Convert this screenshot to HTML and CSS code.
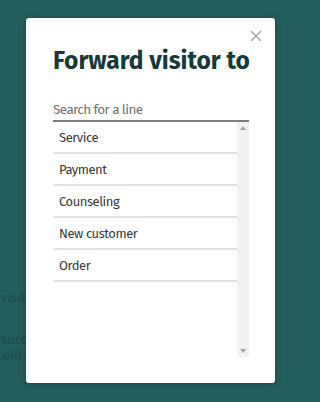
FILE: index.html
```html
<!DOCTYPE html>
<html>
<head>
<meta charset="utf-8">
<link rel="stylesheet" href="styles.css">
</head>
<body>
<div class="page">
  <p class="bg-line l1">visitor is forwarded</p>
  <p class="bg-line l2">succeeded</p>
  <p class="bg-line l3">will be notified</p>
</div>
<div class="modal">
  <button class="close" aria-label="Close">
    <svg width="12" height="12" viewBox="0 0 12 12"><path d="M1 1L11 11M11 1L1 11" stroke="#a9a9a9" stroke-width="1.6" fill="none"/></svg>
  </button>
  <h1 class="title">Forward visitor to</h1>
  <div class="search">Search for a line</div>
  <div class="listbox">
    <ul class="list">
      <li class="item">Service</li>
      <li class="item">Payment</li>
      <li class="item">Counseling</li>
      <li class="item">New customer</li>
      <li class="item">Order</li>
    </ul>
    <div class="scrollbar">
      <span class="arrow up"></span>
      <span class="arrow down"></span>
    </div>
  </div>
</div>
</body>
</html>
```
FILE: styles.css
```css
html, body {
  margin: 0;
  padding: 0;
}
body {
  width: 300px;
  height: 402px;
  background: #235d5b;
  font-family: "Fira Sans", "Open Sans", "Noto Sans", sans-serif;
  overflow: hidden;
  position: relative;
}
.page {
  padding-top: 290px;
  padding-left: 1px;
}
.bg-line {
  margin: 0;
  color: #1b4b49;
  font-size: 13px;
  line-height: 16px;
  white-space: nowrap;
}
.l2 { margin-top: 26px; }
.modal {
  position: absolute;
  left: 26px;
  top: 18px;
  width: 249px;
  height: 365px;
  box-sizing: border-box;
  background: #fff;
  border-radius: 3px;
  box-shadow: 0 1px 6px rgba(0,0,0,0.25);
  padding: 26px 26px 0 27px;
}
.close {
  position: absolute;
  right: 13px;
  top: 12px;
  border: 0;
  background: none;
  padding: 0;
  width: 12px;
  height: 12px;
}
.close svg { display: block; }
.title {
  margin: 0;
  font-size: 24.5px;
  line-height: 34px;
  font-weight: 700;
  color: #143b39;
  white-space: nowrap;
}
.search {
  margin-top: 22px;
  font-size: 13.5px;
  letter-spacing: -0.6px;
  line-height: 20px;
  color: #707070;
  border-bottom: 2px solid #7d7d7d;
}
.listbox {
  display: flex;
  height: 235px;
}
.list {
  list-style: none;
  margin: 0;
  padding: 0;
  flex: 1;
}
.item {
  height: 30px;
  border-bottom: 2px solid #e2e2e2;
  padding-left: 6px;
  font-size: 13px;
  letter-spacing: -0.45px;
  line-height: 31px;
  color: #383838;
}
.scrollbar {
  width: 12px;
  background: #f1f1f1;
  display: flex;
  flex-direction: column;
  justify-content: space-between;
  align-items: center;
  padding: 4px 0;
  box-sizing: border-box;
}
.arrow {
  width: 0;
  height: 0;
  border-left: 3px solid transparent;
  border-right: 3px solid transparent;
}
.up { border-bottom: 4px solid #a3a3a3; }
.down { border-top: 4px solid #a3a3a3; }
```
